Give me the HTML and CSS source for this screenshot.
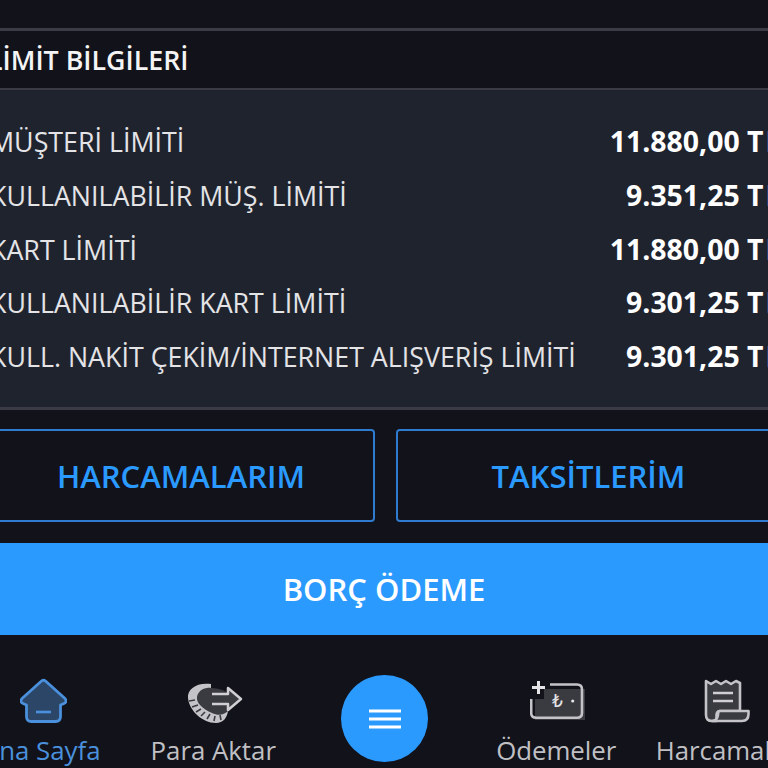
FILE: index.html
```html
<!DOCTYPE html>
<html lang="tr">
<head>
  <meta charset="UTF-8" />
  <meta name="viewport" content="width=device-width, initial-scale=1.0"/>
  <title>Limit Bilgileri</title>
  <link rel="stylesheet" href="styles.css">
</head>
<body>
  <div class="screen">
    <div class="section-head">LİMİT BİLGİLERİ</div>
    <div class="limits">
      <div class="limit-row"><span>MÜŞTERİ LİMİTİ</span><b>11.880,00 <span class="cur">TL</span></b></div>
      <div class="limit-row"><span>KULLANILABİLİR MÜŞ. LİMİTİ</span><b>9.351,25 <span class="cur">TL</span></b></div>
      <div class="limit-row"><span>KART LİMİTİ</span><b>11.880,00 <span class="cur">TL</span></b></div>
      <div class="limit-row"><span>KULLANILABİLİR KART LİMİTİ</span><b>9.301,25 <span class="cur">TL</span></b></div>
      <div class="limit-row"><span>KULL. NAKİT ÇEKİM/İNTERNET ALIŞVERİŞ LİMİTİ</span><b>9.301,25 <span class="cur">TL</span></b></div>
    </div>
    <div class="actions">
      <button class="outline-btn wide">HARCAMALARIM</button>
      <button class="outline-btn">TAKSİTLERİM</button>
    </div>
    <button class="pay-btn">BORÇ ÖDEME</button>
    <nav class="tabbar">
      <div class="tab active">
        <svg class="tab-icon" viewBox="0 0 47 45" width="47" height="45">
          <path d="M21.5 2.5 Q23.5 1 25.5 2.5 L45 20 Q47.5 23.5 44 25 L40.5 26.5 V38 Q40.5 43 35.5 43 H11.5 Q6.5 43 6.5 38 V26.5 L3 25 Q-0.5 23.5 2 20 Z" fill="#2c4668" stroke="#4a90dc" stroke-width="2.8" stroke-linejoin="round"/>
          <path d="M16 33.5 H31" stroke="#4a90dc" stroke-width="2.6"/>
        </svg>
        <span>Ana Sayfa</span>
      </div>
      <div class="tab">
        <svg class="tab-icon" viewBox="0 -5 56 46" width="56" height="46">
          <path d="M22 5 C16 4 9 9 9 14 C9 21 16 27 25 31 C31 34 37 33 41 28 L41 10 C36 6 28 5 22 5 Z" fill="#3a3a41"/>
          <path d="M24 1 C10 -1 0 6 1 15 C2 27 15 40 29 40 C36 40 40 35 41 28 C37 32 31 33 25 30 C16 26 9 20 10 14 C11 8 17 4 24 5 Z" fill="#c4c4c8"/>
          <path d="M2 18 L8 17 M5 24 L11 22 M9 29 L14 26 M14 33 L18 29 M20 36 L23 31 M27 38 L28 33 M34 37 L33 32" stroke="#3a3a41" stroke-width="1.6"/>
          <path d="M25 11 H41 V5 L54 16 L41 27 V21 H25" fill="#3a3a41" stroke="#d0d0d4" stroke-width="2.5" stroke-linejoin="round"/>
        </svg>
        <span>Para Aktar</span>
      </div>
      <div class="tab-menu">
        <div class="menu-circle">
          <svg viewBox="0 0 32 20" width="32" height="20"><path d="M0 2 H32 M0 10 H32 M0 18 H32" stroke="#fff" stroke-width="3"/></svg>
        </div>
      </div>
      <div class="tab">
        <svg class="tab-icon" viewBox="0 0 56 40" width="56" height="40">
          <path d="M14 8 H55 V39 H5 V18 H14 Z" fill="#3a3a41"/>
          <path d="M20 3.5 H47 Q52 3.5 52 8.5 V32 Q52 36.7 47 36.7 H6 Q1.2 36.7 1.2 32 V18" fill="none" stroke="#c4c4c8" stroke-width="2.6"/>
          <path d="M2 6.5 H15 M8.5 0 V13" stroke="#e4e4e7" stroke-width="3"/>
          <text x="22" y="26" class="lira">₺</text>
          <circle cx="42.7" cy="20" r="1.6" fill="#e4e4e7"/>
        </svg>
        <span>Ödemeler</span>
      </div>
      <div class="tab">
        <svg class="tab-icon" viewBox="0 0 46 44" width="46" height="44">
          <path d="M2 2 L7 5 L12 2 L17 5 L22 2 L27 5 L32 2 L36 4 V32 H16 Q12.5 32 12.5 36 V42 H8 Q2 42 2 36 Z" fill="#3a3a41" stroke="#c4c4c8" stroke-width="2.6" stroke-linejoin="round"/>
          <path d="M9 14 H29 M9 22 H29" stroke="#d0d0d4" stroke-width="2.6"/>
          <path d="M16 32 H44.5 V35 Q44.5 42 38 42 H8 Q13 42 14 36 Q14 32 16 32 Z" fill="#3a3a41" stroke="#c4c4c8" stroke-width="2.6" stroke-linejoin="round"/>
        </svg>
        <span>Harcamalar</span>
      </div>
    </nav>
  </div>
</body>
</html>
```

FILE: styles.css
```css
:root {
  --bg: #12121a;
  --panel: #1f232e;
  --line: #3a3b45;
  --accent: #2b9aff;
  --text: #f4f4f5;
  --muted: #c0c0c4;
}
html, body {
  margin: 0;
  padding: 0;
  background: var(--bg);
  overflow: hidden;
  height: 768px;
}
.screen {
  width: 800px;
  margin-left: -16px;
  padding-top: 28px;
  font-family: "Open Sans", "Noto Sans", sans-serif;
  color: var(--text);
}
.section-head {
  border-top: 3px solid var(--line);
  border-bottom: 2px solid var(--line);
  height: 57px;
  line-height: 57px;
  padding-left: 4px;
  font-size: 26.8px;
  font-weight: 600;
}
.limits {
  background: var(--panel);
  border-bottom: 3px solid var(--line);
  box-sizing: content-box;
  height: 315px;
  padding: 2px 4.5px 0 6px;
  display: flex;
  flex-direction: column;
  justify-content: center;
}
.limit-row {
  display: flex;
  justify-content: space-between;
  align-items: baseline;
  height: 53.75px;
  line-height: 53.75px;
  font-size: 26.8px;
  color: #e4e4e7;
  white-space: nowrap;
}
.limit-row b {
  font-size: 28.4px;
  font-weight: 700;
  color: #fff;
}
.cur {
  letter-spacing: 2px;
  margin-right: -4px;
}
.actions {
  display: flex;
  gap: 21px;
  margin-top: 19px;
  height: 93px;
}
.outline-btn {
  flex: 0 0 385px;
  background: none;
  border: 2px solid #2e7bd0;
  border-radius: 4px;
  color: var(--accent);
  font: 600 31px "Open Sans", "Noto Sans", sans-serif;
}
.outline-btn.wide {
  flex-basis: 388px;
  margin-left: 3px;
}
.pay-btn {
  display: block;
  width: 100%;
  height: 92px;
  margin-top: 21px;
  border: 0;
  background: var(--accent);
  color: #fff;
  font: 600 31px "Open Sans", "Noto Sans", sans-serif;
}
.tabbar {
  display: flex;
  margin-left: -28px;
  width: 858px;
  height: 133px;
}
.tab {
  flex: none;
  width: 171.5px;
  display: flex;
  flex-direction: column;
  align-items: center;
  font-size: 25.8px;
  color: var(--muted);
  white-space: nowrap;
}
.tab:last-child {
  margin-left: -2px;
}
.tab.active {
  color: #4a90dc;
}
.tab-icon {
  height: 46px;
  margin-top: 43px;
  margin-left: 3px;
  flex: none;
}
.tab span {
  line-height: 34px;
  margin-top: 9px;
}
.tab-menu {
  flex: none;
  width: 171.5px;
  display: flex;
  justify-content: center;
}
.menu-circle {
  width: 87px;
  height: 87px;
  margin-top: 40px;
  border-radius: 50%;
  background: var(--accent);
  display: flex;
  align-items: center;
  justify-content: center;
}
.lira {
  font: 400 17px "DejaVu Sans", sans-serif;
  fill: #e4e4e7;
}
```
